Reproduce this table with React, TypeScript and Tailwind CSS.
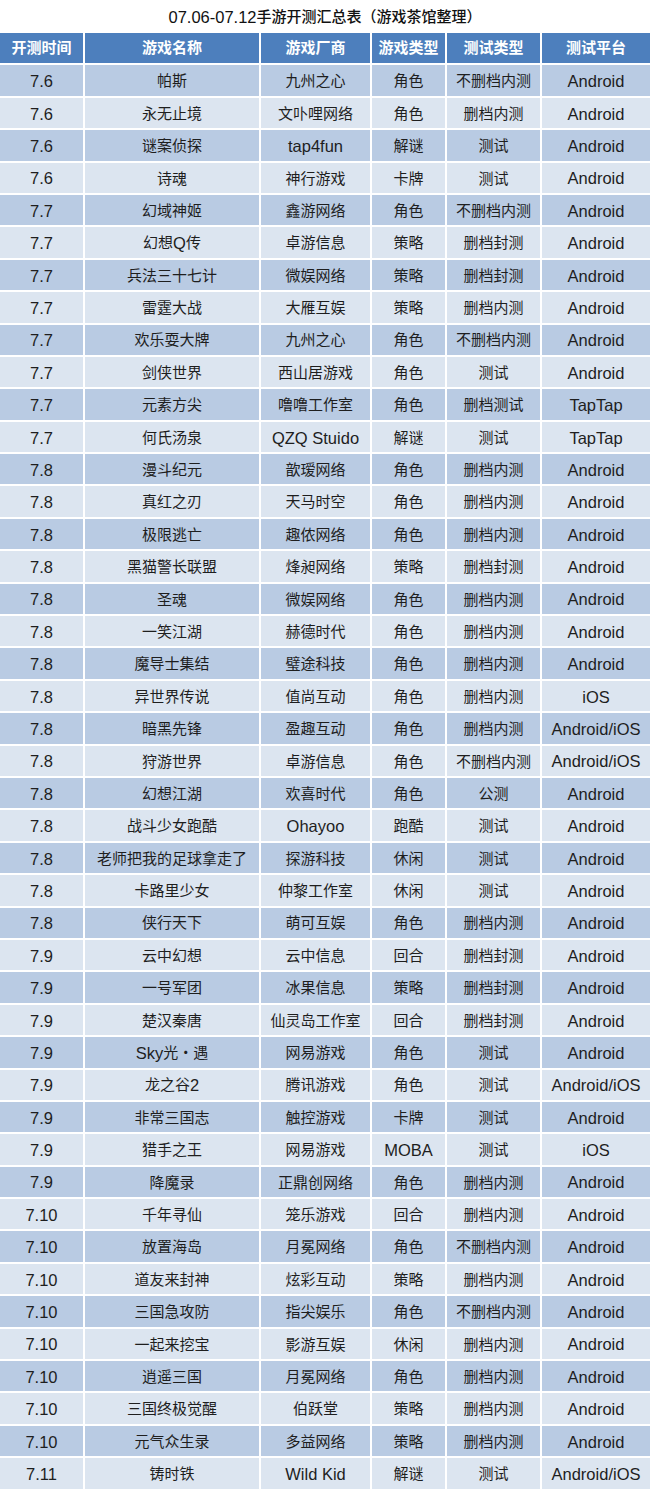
import React from "react";

const rows: string[][] = [
  ["7.6", "帕斯", "九州之心", "角色", "不删档内测", "Android"],
  ["7.6", "永无止境", "文卟哩网络", "角色", "删档内测", "Android"],
  ["7.6", "谜案侦探", "tap4fun", "解谜", "测试", "Android"],
  ["7.6", "诗魂", "神行游戏", "卡牌", "测试", "Android"],
  ["7.7", "幻域神姬", "鑫游网络", "角色", "不删档内测", "Android"],
  ["7.7", "幻想Q传", "卓游信息", "策略", "删档封测", "Android"],
  ["7.7", "兵法三十七计", "微娱网络", "策略", "删档封测", "Android"],
  ["7.7", "雷霆大战", "大雁互娱", "策略", "删档内测", "Android"],
  ["7.7", "欢乐耍大牌", "九州之心", "角色", "不删档内测", "Android"],
  ["7.7", "剑侠世界", "西山居游戏", "角色", "测试", "Android"],
  ["7.7", "元素方尖", "噜噜工作室", "角色", "删档测试", "TapTap"],
  ["7.7", "何氏汤泉", "QZQ Stuido", "解谜", "测试", "TapTap"],
  ["7.8", "漫斗纪元", "歆瑷网络", "角色", "删档内测", "Android"],
  ["7.8", "真红之刃", "天马时空", "角色", "删档内测", "Android"],
  ["7.8", "极限逃亡", "趣侬网络", "角色", "删档内测", "Android"],
  ["7.8", "黑猫警长联盟", "烽昶网络", "策略", "删档封测", "Android"],
  ["7.8", "圣魂", "微娱网络", "角色", "删档内测", "Android"],
  ["7.8", "一笑江湖", "赫德时代", "角色", "删档内测", "Android"],
  ["7.8", "魔导士集结", "璧途科技", "角色", "删档内测", "Android"],
  ["7.8", "异世界传说", "值尚互动", "角色", "删档内测", "iOS"],
  ["7.8", "暗黑先锋", "盈趣互动", "角色", "删档内测", "Android/iOS"],
  ["7.8", "狩游世界", "卓游信息", "角色", "不删档内测", "Android/iOS"],
  ["7.8", "幻想江湖", "欢喜时代", "角色", "公测", "Android"],
  ["7.8", "战斗少女跑酷", "Ohayoo", "跑酷", "测试", "Android"],
  ["7.8", "老师把我的足球拿走了", "探游科技", "休闲", "测试", "Android"],
  ["7.8", "卡路里少女", "仲黎工作室", "休闲", "测试", "Android"],
  ["7.8", "侠行天下", "萌可互娱", "角色", "删档内测", "Android"],
  ["7.9", "云中幻想", "云中信息", "回合", "删档封测", "Android"],
  ["7.9", "一号军团", "冰果信息", "策略", "删档封测", "Android"],
  ["7.9", "楚汉秦唐", "仙灵岛工作室", "回合", "删档封测", "Android"],
  ["7.9", "Sky光・遇", "网易游戏", "角色", "测试", "Android"],
  ["7.9", "龙之谷2", "腾讯游戏", "角色", "测试", "Android/iOS"],
  ["7.9", "非常三国志", "触控游戏", "卡牌", "测试", "Android"],
  ["7.9", "猎手之王", "网易游戏", "MOBA", "测试", "iOS"],
  ["7.9", "降魔录", "正鼎创网络", "角色", "删档内测", "Android"],
  ["7.10", "千年寻仙", "笼乐游戏", "回合", "删档内测", "Android"],
  ["7.10", "放置海岛", "月冕网络", "角色", "不删档内测", "Android"],
  ["7.10", "道友来封神", "炫彩互动", "策略", "删档内测", "Android"],
  ["7.10", "三国急攻防", "指尖娱乐", "角色", "不删档内测", "Android"],
  ["7.10", "一起来挖宝", "影游互娱", "休闲", "删档内测", "Android"],
  ["7.10", "逍遥三国", "月冕网络", "角色", "删档内测", "Android"],
  ["7.10", "三国终极觉醒", "伯跃堂", "策略", "删档内测", "Android"],
  ["7.10", "元气众生录", "多益网络", "策略", "删档内测", "Android"],
  ["7.11", "铸时铁", "Wild Kid", "解谜", "测试", "Android/iOS"],
];

const headers = ["开测时间", "游戏名称", "游戏厂商", "游戏类型", "测试类型", "测试平台"];

function Mixed({ text }: { text: string }) {
  const parts = text.split(/([\u3000-\u9fff\uff00-\uffef・]+)/).filter((p) => p.length > 0);
  return (
    <>
      {parts.map((p, k) =>
        /[\u3000-\u9fff\uff00-\uffef・]/.test(p) ? (
          <span key={k} className="text-[15px]">
            {p}
          </span>
        ) : (
          <span key={k} className="text-[16.5px]">
            {p}
          </span>
        )
      )}
    </>
  );
}

export default function App() {
  return (
    <div
      className="w-[650px] bg-white text-[#1e1e1e]"
      style={{ fontFamily: '"Liberation Sans", "Noto Sans CJK SC", sans-serif' }}
    >
      <div className="h-[33px] flex items-center justify-center font-medium text-[#111] pt-[1px]">
        <span className="text-[16.5px]">07.06-07.12</span>
        <span className="text-[15px]">手游开测汇总表（游戏茶馆整理）</span>
      </div>
      <div className="grid grid-cols-[83px_174px_109px_73px_93px_1fr] gap-x-[2px] gap-y-[2px] bg-white">
        {headers.map((h) => (
          <div
            key={h}
            className="h-[30.4px] bg-[#4d7fbd] text-white font-bold text-[15px] flex items-center justify-center"
          >
            {h}
          </div>
        ))}
        {rows.map((r, i) =>
          r.map((c, j) => (
            <div
              key={`${i}-${j}`}
              className={`h-[30.4px] pt-[2px] flex items-center justify-center whitespace-nowrap ${
                i % 2 === 0 ? "bg-[#b9cbe3]" : "bg-[#dce5f0]"
              }`}
            >
              <Mixed text={c} />
            </div>
          ))
        )}
      </div>
    </div>
  );
}
